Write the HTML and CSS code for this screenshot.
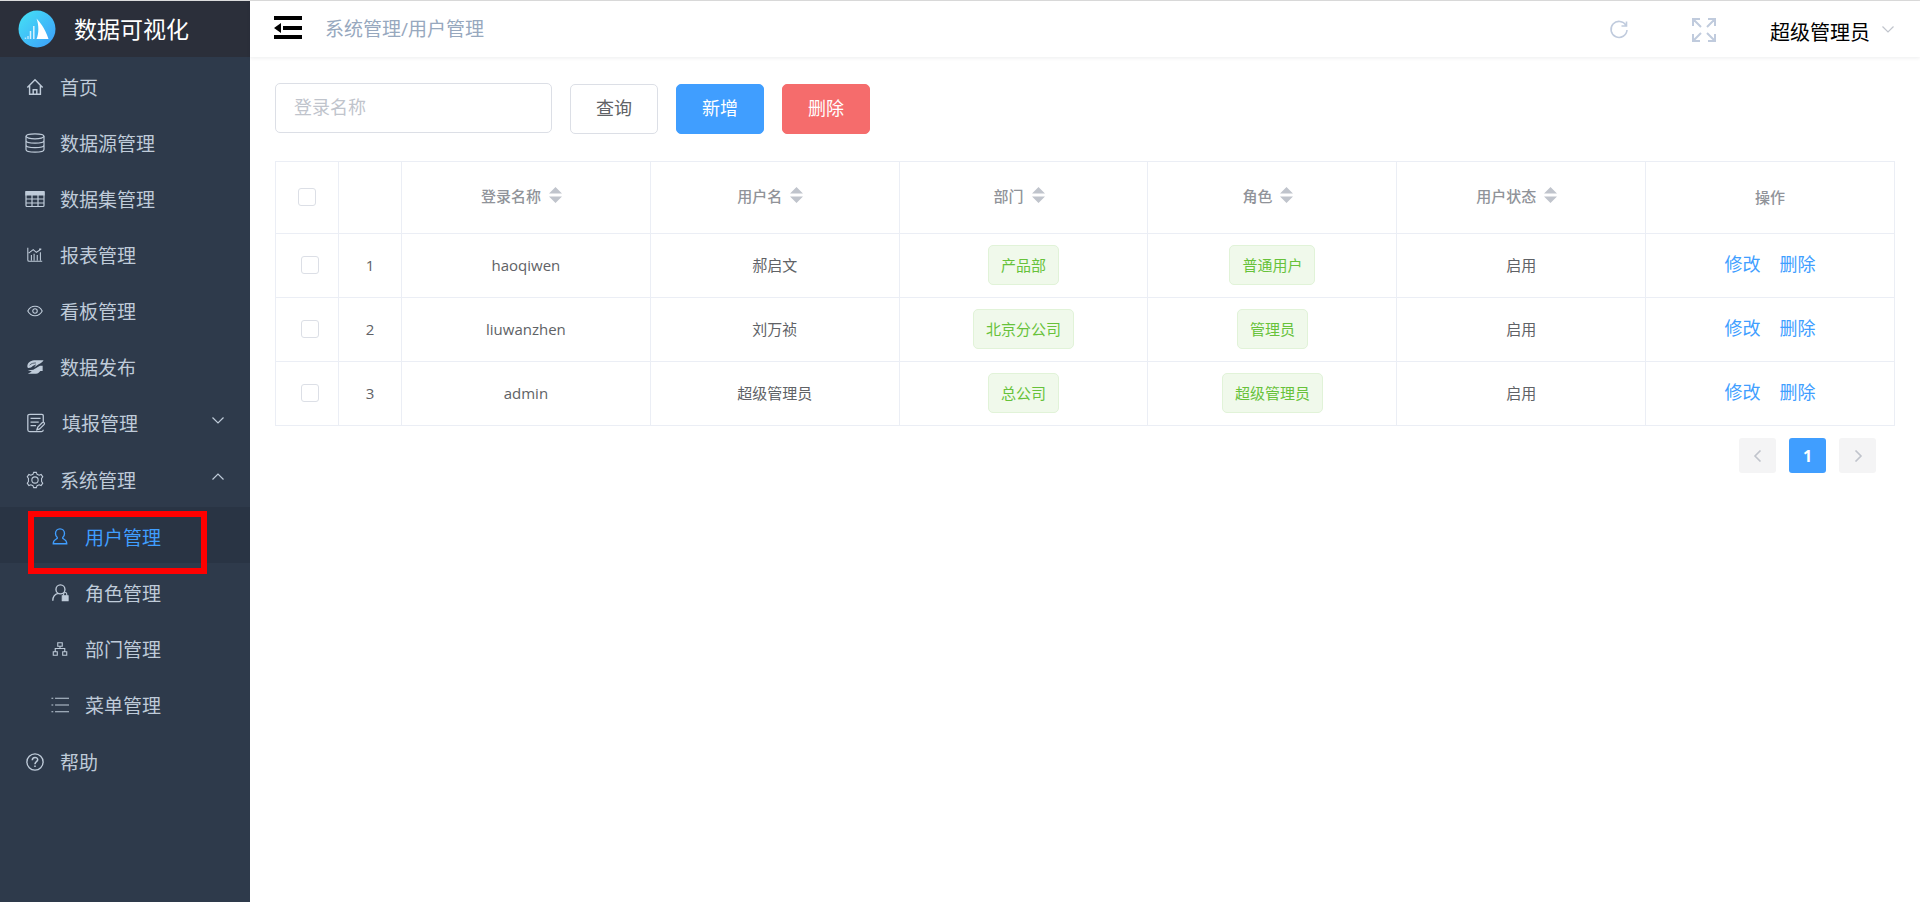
FILE: index.html
```html
<!DOCTYPE html>
<html lang="zh-CN">
<head>
<meta charset="utf-8">
<title>数据可视化</title>
<link rel="stylesheet" href="styles.css">
</head>
<body>
<div class="app">
  <aside class="sidebar">
    <div class="brand">
      <svg class="brand-logo" viewBox="0 0 38 38" aria-hidden="true">
        <defs><linearGradient id="logoFill" x1="0" y1="0" x2="1" y2="1"><stop offset="0" stop-color="#45e3f5"/><stop offset="1" stop-color="#3c9cfa"/></linearGradient></defs>
        <circle cx="19" cy="19" r="18.5" fill="url(#logoFill)"/>
        <path d="M18.500 8.500C21 11 27 18 30.500 29H18.500C21 24 21 15 18.500 8.500Z" fill="#fff"/>
        <path d="M15.800 16v13M12.500 21v8" stroke="#fff" stroke-opacity=".8" stroke-width="1.500"/>
        <path d="M10 26v3M7.500 27.500V29" stroke="#fff" stroke-opacity=".6" stroke-width="1.500"/>
      </svg>
      <h1 class="brand-name">数据可视化</h1>
    </div>
    <nav>
      <ul class="menu">
        <li><a class="menu-link" href="#"><svg class="icon" viewBox="0 0 20 20"><path d="M1.500 10.500 10 2l8.500 8.500M4 8.500V18h12V8.500M8 18v-5h4v5" stroke-width="1.600"/></svg><span>首页</span></a></li>
        <li><a class="menu-link" href="#"><svg class="icon icon-large" viewBox="0 0 20 20"><ellipse cx="10" cy="3.300" rx="9" ry="2.500"/><path d="M1 3.300v13.200C1 20 19 20 19 16.500V3.300M1 7.500c0 3.500 18 3.500 18 0M1 12c0 3.500 18 3.500 18 0"/></svg><span>数据源管理</span></a></li>
        <li><a class="menu-link" href="#"><svg class="icon icon-large" viewBox="0 0 20 20"><rect x="1" y="2.500" width="18" height="15" rx="1"/><path d="M1 2.500h18v3.500H1z" fill="currentColor"/><path d="M1 10h18M1 14h18M7 5v12.500M13 5v12.500"/></svg><span>数据集管理</span></a></li>
        <li><a class="menu-link" href="#"><svg class="icon" viewBox="0 0 20 20"><path d="M2 2v13.500c0 1 .5 1.500 1.500 1.500H18M3 8l5-4 3.500 3L17 3.500M17 3.500h-2.500M6 16V10M9 16V8.500M12.500 16V10M16 16V7"/></svg><span>报表管理</span></a></li>
        <li><a class="menu-link" href="#"><svg class="icon" viewBox="0 0 20 20"><path d="M2 10C5.500 3 14.500 3 18 10 14.500 17 5.500 17 2 10Z"/><circle cx="10" cy="10" r="2.500"/></svg><span>看板管理</span></a></li>
        <li><a class="menu-link" href="#"><svg class="icon" viewBox="0 0 20 20"><path d="M19.500 2.500H9C4.500 3 1.500 5.500 1.500 9.500c0 1 .5 1.500 1 1.500 2.500 0 4-.5 5-2l4-2-2.500 3.500 5-3.500c2.500-1 4.500-2.500 5.500-4.500Z" fill="currentColor" stroke="none"/><path d="M18.500 8.500h-3L8 13l-6 .7 4.500 1.300L2 17.500h9c2.500 0 4-2 5-3h2.500V8.500Z" fill="currentColor" stroke="none"/><path d="M4 8c2-2 4-2.500 7-2.500" stroke="#2e3a4b" stroke-width=".8"/></svg><span>数据发布</span></a></li>
        <li><button class="menu-link menu-trigger" type="button" aria-expanded="false"><svg class="icon icon-wide" viewBox="0 0 22 22"><path d="M19 10V3c0-1-.5-1.500-1.500-1.500h-13C3 1.500 2 2 2 3v15.500C2 20 3 20.500 4 20.500h13c1.500 0 2-.5 2-2M5 6h11M5 10h9M5 14h6M12 18.500l1-3 5-5c1.500-1 3 .5 2 2l-5 5z" stroke-width="1.400"/></svg><span>填报管理</span><svg class="chevron" viewBox="0 0 12 12"><path d="M.500 3.500 6 9l5.500-5.500"/></svg></button></li>
        <li>
          <button class="menu-link menu-trigger" type="button" aria-expanded="true"><svg class="icon" viewBox="0 0 20 20"><path d="M8.500 1.500h3l.8 2.200 2.300 1 2.200-.9 1.800 2.700-1.300 1.700v3.600l1.300 1.700-1.800 2.700-2.200-.9-2.300 1-.8 2.200h-3l-.8-2.200-2.300-1-2.200.9-1.800-2.700 1.300-1.700V8.200L1.400 6.500l1.800-2.700 2.200.9 2.300-1z"/><circle cx="10" cy="10" r="3.500"/></svg><span>系统管理</span><svg class="chevron" viewBox="0 0 12 12"><path d="M.500 8.500 6 3l5.500 5.500"/></svg></button>
          <ul class="menu submenu">
            <li class="highlighted"><a class="menu-link active" href="#" aria-current="page"><svg class="icon" viewBox="0 0 20 20"><path d="M10 1c3 0 5 2.300 5 5 0 1.800-1 3.600-2 4.500-.5 1 .5 1.500 1.500 2 2 1 3 2.500 3 5h-15c0-2.500 1-4 3-5 1-.5 2-1 1.500-2C6 9.600 5 7.800 5 6c0-2.700 2-5 5-5Z" stroke-width="1.500"/></svg><span>用户管理</span></a></li>
            <li><a class="menu-link" href="#"><svg class="icon" viewBox="0 0 20 20"><circle cx="10.500" cy="6" r="5" stroke-width="1.500"/><path d="M2 18.500C2 14 4 11.500 8 10.500" stroke-width="1.500"/><path d="M12.500 13h6.500v5.500h-6.500z" fill="currentColor"/><path d="M14 13v-2c0-2 3.500-2 3.500 0v2"/></svg><span>角色管理</span></a></li>
            <li><a class="menu-link" href="#"><svg class="icon" viewBox="0 0 20 20"><path d="M7.500 3h5v4h-5zM2.500 13h4.500v4H2.500zM13 13h4.500v4H13zM10 7v2.500M4.700 13V9.500h10.600V13"/></svg><span>部门管理</span></a></li>
            <li><a class="menu-link" href="#"><svg class="icon" viewBox="0 0 20 20"><path d="M.500 2.500h2M4.500 2.500H20M.500 10h2M4.500 10H20M.500 17.500h2M4.500 17.500H20"/></svg><span>菜单管理</span></a></li>
          </ul>
        </li>
        <li><a class="menu-link" href="#"><svg class="icon" viewBox="0 0 20 20"><circle cx="10" cy="10" r="9" stroke-width="1.500"/><path d="M7 8c0-4 6-4 6-.5 0 2.200-3 2.200-3 5M10 13.800v1.800" stroke-width="1.700"/></svg><span>帮助</span></a></li>
      </ul>
    </nav>
  </aside>

  <div class="page">
    <header class="topbar">
      <button class="icon-button collapse" type="button" aria-label="收起菜单"><svg viewBox="0 0 30 24"><path d="M1 0h28v4H1zM10 10h19v4H10zM1 19h28v4H1zM1 12l7-5v10z" fill="currentColor" stroke="none"/></svg></button>
      <span class="breadcrumb">系统管理/用户管理</span>
      <div class="tools">
        <button class="icon-button refresh" type="button" aria-label="刷新"><svg viewBox="0 0 20 20"><path d="M17 5.500A8 8 0 1 0 18 10M17.500 1.500v4.500H12.500" stroke-width="1.600"/></svg></button>
        <button class="icon-button fullscreen" type="button" aria-label="全屏"><svg viewBox="0 0 24 24"><path d="M1 8V1h7M1.500 1.500l7.500 7.500M16 1h7v7M22.500 1.500 15 9M1 16v7h7M1.500 22.500 9 15M23 16v7h-7M22.500 22.500 15 15" stroke-width="2"/></svg></button>
        <button class="user" type="button"><span>超级管理员</span><svg class="chevron" viewBox="0 0 12 12"><path d="M.500 3.500 6 9l5.500-5.500"/></svg></button>
      </div>
    </header>

    <main class="content">
      <form class="filters">
        <input class="field" type="text" placeholder="登录名称" aria-label="登录名称">
        <button class="btn" type="button">查询</button>
        <button class="btn btn-primary" type="button">新增</button>
        <button class="btn btn-danger" type="button">删除</button>
      </form>

      <table class="users">
        <colgroup><col class="col-narrow"><col class="col-narrow"><col><col><col><col><col><col></colgroup>
        <thead>
          <tr>
            <th><input class="check" type="checkbox" aria-label="全选"></th>
            <th></th>
            <th><span class="sortable">登录名称<svg class="sort" viewBox="0 0 13 16"><path d="M0 6.500 6.500 0 13 6.500zM0 9.500 6.500 16 13 9.500z"/></svg></span></th>
            <th><span class="sortable">用户名<svg class="sort" viewBox="0 0 13 16"><path d="M0 6.500 6.500 0 13 6.500zM0 9.500 6.500 16 13 9.500z"/></svg></span></th>
            <th><span class="sortable">部门<svg class="sort" viewBox="0 0 13 16"><path d="M0 6.500 6.500 0 13 6.500zM0 9.500 6.500 16 13 9.500z"/></svg></span></th>
            <th><span class="sortable">角色<svg class="sort" viewBox="0 0 13 16"><path d="M0 6.500 6.500 0 13 6.500zM0 9.500 6.500 16 13 9.500z"/></svg></span></th>
            <th><span class="sortable">用户状态<svg class="sort" viewBox="0 0 13 16"><path d="M0 6.500 6.500 0 13 6.500zM0 9.500 6.500 16 13 9.500z"/></svg></span></th>
            <th>操作</th>
          </tr>
        </thead>
        <tbody>
          <tr>
            <td class="pick"><input class="check" type="checkbox" aria-label="选择 haoqiwen"></td>
            <td>1</td><td>haoqiwen</td><td>郝启文</td>
            <td><span class="tag">产品部</span></td><td><span class="tag">普通用户</span></td><td>启用</td>
            <td><div class="actions"><a href="#">修改</a><a href="#">删除</a></div></td>
          </tr>
          <tr>
            <td class="pick"><input class="check" type="checkbox" aria-label="选择 liuwanzhen"></td>
            <td>2</td><td>liuwanzhen</td><td>刘万祯</td>
            <td><span class="tag">北京分公司</span></td><td><span class="tag">管理员</span></td><td>启用</td>
            <td><div class="actions"><a href="#">修改</a><a href="#">删除</a></div></td>
          </tr>
          <tr>
            <td class="pick"><input class="check" type="checkbox" aria-label="选择 admin"></td>
            <td>3</td><td>admin</td><td>超级管理员</td>
            <td><span class="tag">总公司</span></td><td><span class="tag">超级管理员</span></td><td>启用</td>
            <td><div class="actions"><a href="#">修改</a><a href="#">删除</a></div></td>
          </tr>
        </tbody>
      </table>

      <nav class="pager" aria-label="分页">
        <button class="pager-btn" type="button" disabled aria-label="上一页"><svg viewBox="0 0 12 12"><path d="M8.500 .500 3 6l5.500 5.500"/></svg></button>
        <button class="pager-btn current" type="button" aria-current="page">1</button>
        <button class="pager-btn" type="button" disabled aria-label="下一页"><svg viewBox="0 0 12 12"><path d="M3.500 .500 9 6l-5.500 5.500"/></svg></button>
      </nav>
    </main>
  </div>
</div>
</body>
</html>
```
FILE: styles.css
```css
*, *::before, *::after { box-sizing: border-box; }

body {
  margin: 0;
  font-family: "Open Sans", "Noto Sans CJK SC", sans-serif;
  font-size: 15px;
  color: #606266;
  background: #fff;
}

button, input { font: inherit; }
button { padding: 0; border: 0; background: none; cursor: pointer; }
a { text-decoration: none; }

svg {
  display: block;
  flex: none;
  fill: none;
  stroke: currentColor;
  stroke-width: 1.2;
}

.app {
  display: flex;
  min-height: 100vh;
  border-top: 1px solid #dcdcdc;
}

/* Sidebar */
.sidebar {
  flex: none;
  width: 250px;
  background: #2e3a4b;
  color: #bfcbd9;
}

.brand {
  display: flex;
  align-items: center;
  gap: 18px;
  height: 56px;
  padding-left: 18px;
  background: #2b2f3a;
}
.brand-logo { width: 38px; height: 38px; stroke: none; }
.brand-name {
  margin: 0;
  font-size: 23px;
  font-weight: 400;
  line-height: 32px;
  color: #fff;
}

.menu { margin: 0; padding: 0; list-style: none; }
.menu-link {
  display: flex;
  align-items: center;
  gap: 16px;
  width: 100%;
  height: 56px;
  padding: 3px 26px 0;
  font-size: 19px;
  color: inherit;
}
.menu-trigger { height: 57px; }
.icon { width: 18px; height: 18px; }
.icon-large { width: 20px; height: 20px; margin: 0 -1px; }
.icon-wide { width: 20px; height: 20px; }
.menu-link .chevron { margin: 0 0 6px auto; }
.chevron { width: 12px; height: 12px; }

.submenu { padding-bottom: 1px; }
.submenu .menu-link { padding-left: 51px; }
.submenu .active { background: #293444; color: #409eff; }

.highlighted { position: relative; }
.highlighted::after {
  content: "";
  position: absolute;
  top: 4px;
  left: 28px;
  right: 43px;
  height: 63px;
  border: 6px solid #f00;
  pointer-events: none;
  z-index: 1;
}

/* Top bar */
.page { flex: 1; min-width: 0; }
.topbar {
  display: flex;
  align-items: center;
  height: 56px;
  padding: 0 26px 0 23px;
  box-shadow: 0 1px 4px rgba(0, 21, 41, 0.08);
}
.icon-button { color: #c0cbdd; }
.collapse { padding-bottom: 2px; color: #000; }
.collapse svg { width: 30px; height: 24px; }
.breadcrumb {
  margin-left: 22px;
  padding-bottom: 2px;
  font-size: 19px;
  color: #97a8be;
}
.tools { display: flex; align-items: center; margin-left: auto; padding-top: 2px; }
.refresh svg { width: 20px; height: 20px; }
.fullscreen { margin: 0 54px 0 63px; }
.fullscreen svg { width: 24px; height: 24px; }
.user {
  display: flex;
  align-items: center;
  gap: 12px;
  padding-top: 2px;
  font-size: 20px;
  color: #000;
}
.user .chevron { margin-bottom: 4px; color: #c0c4cc; }

/* Content */
.content { padding: 26px 25px; }
.filters { display: flex; gap: 18px; margin-bottom: 27px; }
.field {
  width: 277px;
  height: 50px;
  padding: 0 18px 2px;
  border: 1px solid #dcdfe6;
  border-radius: 5px;
  font-size: 18px;
  color: #606266;
}
.field::placeholder { color: #c0c4cc; }
.btn {
  width: 88px;
  height: 50px;
  margin-top: 1px;
  padding-bottom: 4px;
  border: 1px solid #dcdfe6;
  border-radius: 5px;
  font-size: 18px;
  color: #606266;
}
.btn-primary { border-color: #409eff; background: #409eff; color: #fff; }
.btn-danger { border-color: #f56c6c; background: #f56c6c; color: #fff; }

.users {
  width: 100%;
  table-layout: fixed;
  border-spacing: 0;
  border: solid #ebeef5;
  border-width: 1px 0 0 1px;
  text-align: center;
}
.col-narrow { width: 63px; }
.users th, .users td {
  padding: 0 0 2px;
  border: solid #ebeef5;
  border-width: 0 1px 1px 0;
}
.users th { height: 72px; font-weight: 500; color: #909399; }
.users td { height: 64px; }
.users .pick { padding-left: 6px; }

.sortable { display: inline-flex; align-items: center; padding-bottom: 3px; }
.sort { width: 13px; height: 16px; margin: 0 9px 0 8px; fill: #c0c4cc; stroke: none; }

.check {
  appearance: none;
  display: block;
  width: 18px;
  height: 18px;
  margin: 0 auto;
  border: 1px solid #dcdfe6;
  border-radius: 3px;
  background: #fff;
}
.check:checked { border-color: #409eff; background: #409eff; }

.tag {
  display: inline-block;
  padding: 0 12px;
  border: 1px solid #e1f3d8;
  border-radius: 5px;
  background: #f0f9eb;
  line-height: 38px;
  color: #67c23a;
}
.actions {
  display: flex;
  justify-content: center;
  gap: 19px;
  padding-bottom: 3px;
  font-size: 18px;
}
.actions a { color: #409eff; }

.pager {
  display: flex;
  justify-content: flex-end;
  gap: 13px;
  padding: 12px 19px;
}
.pager-btn {
  display: flex;
  align-items: center;
  justify-content: center;
  width: 37px;
  height: 35px;
  border-radius: 3px;
  background: #f4f4f5;
  font-size: 16px;
  color: #c0c4cc;
}
.pager-btn svg { width: 12px; height: 12px; stroke-width: 1.6; }
.pager-btn.current { background: #409eff; font-weight: 700; color: #fff; }
```
